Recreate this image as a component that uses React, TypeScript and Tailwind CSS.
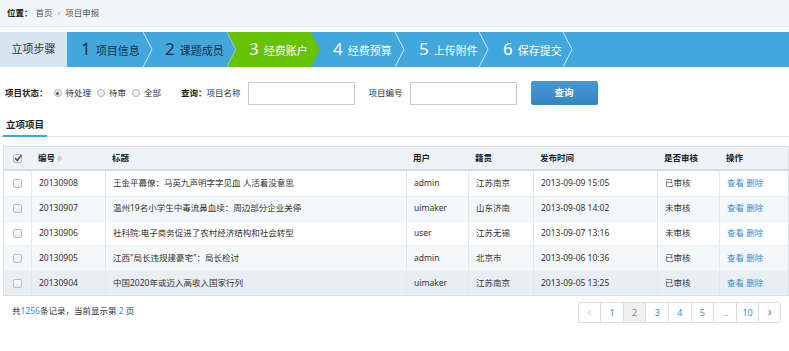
import React from "react";

const rows = [
  ["20130908", "王金平幕僚：马英九声明字字见血 人活着没意思", "admin", "江苏南京", "2013-09-09 15:05", "已审核"],
  ["20130907", "温州19名小学生中毒流鼻血续：周边部分企业关停", "uimaker", "山东济南", "2013-09-08 14:02", "未审核"],
  ["20130906", "社科院:电子商务促进了农村经济结构和社会转型", "user", "江苏无锡", "2013-09-07 13:16", "未审核"],
  ["20130905", "江西\"局长违规建豪宅\"：局长检讨", "admin", "北京市", "2013-09-06 10:36", "已审核"],
  ["20130904", "中国2020年或迈入高收入国家行列", "uimaker", "江苏南京", "2013-09-05 13:25", "已审核"],
];

const rowBg = ["bg-white", "bg-[#f5f8fa]", "bg-white", "bg-[#f5f8fa]", "bg-[#e9eef2]"];

const steps = [
  { n: "1", label: "项目信息", w: "w-[76px] pl-[14px]", text: "text-[#17304a]" },
  { n: "2", label: "课题成员", w: "w-[84px] pl-[22px]", text: "text-[#17304a]" },
  { n: "3", label: "经费账户", w: "w-[84px] pl-[22px]", text: "text-white", active: true },
  { n: "4", label: "经费预算", w: "w-[84px] pl-[22px]", text: "text-white" },
  { n: "5", label: "上传附件", w: "w-[84px] pl-[24px]", text: "text-white" },
  { n: "6", label: "保存提交", w: "w-[84px] pl-[24px]", text: "text-white" },
];

const Chevron = () => (
  <svg className="absolute left-full top-0 z-10" width="10" height="35" viewBox="0 0 10 35">
    <polyline points="0,0 9,17.5 0,35" fill="none" stroke="#cfe9f7" strokeWidth="1" />
  </svg>
);

const Checkbox = ({ checked }: { checked?: boolean }) => (
  <div className="relative w-[9px] h-[9px] rounded-[2px] border border-[#b9bec2] bg-gradient-to-b from-white to-[#e6e9eb]">
    {checked && (
      <svg className="absolute -left-px -top-[2px]" width="10" height="10" viewBox="0 0 10 10">
        <polyline points="2,5 4.2,7.5 8.5,2" fill="none" stroke="#555" strokeWidth="1.6" />
      </svg>
    )}
  </div>
);

const Radio = ({ checked }: { checked?: boolean }) => (
  <div className="w-[8px] h-[8px] rounded-full border border-[#b0b5b9] bg-[#eef0f2] flex items-center justify-center ml-[6px] mr-[4px]">
    {checked && <div className="w-[3px] h-[3px] rounded-full bg-[#555]" />}
  </div>
);

const cols = "grid grid-cols-[27px_74px_301px_62px_65px_124px_62px_1fr]";

export default function App() {
  return (
    <div className="w-[789px] h-[351px] bg-white overflow-hidden text-[#333] [font-family:'Noto_Sans','Noto_Sans_CJK_SC',sans-serif]">
      {/* breadcrumb */}
      <div className="h-[27px] bg-[#f1f6fa] border-b border-[#dfe8ee] flex items-center pl-[7px] text-[8.5px]">
        <span className="font-bold text-[#222]">位置：</span>
        <span className="ml-[3px] text-[#555]">首页</span>
        <span className="mx-[5px] text-[#aaa]">›</span>
        <span className="text-[#555]">项目申报</span>
      </div>

      {/* stepper */}
      <div className="mt-[5px] h-[35px] bg-[#41a7dc] flex">
        <div className="w-[67px] bg-[#d6e5ef] flex items-center justify-center text-[11px] text-[#333]">立项步骤</div>
        {steps.map((s) => (
          <div key={s.n} className={`relative h-full flex items-center ${s.w}`}>
            {s.active && (
              <svg className="absolute left-0 top-0 z-20" width="93" height="35" viewBox="0 0 93 35">
                <polygon points="0,0 84,0 93,17.5 84,35 0,35 9,17.5" fill="#66c205" />
              </svg>
            )}
            <div className={`relative z-30 flex items-baseline ${s.text}`}>
              <span className="text-[17px] leading-none">{s.n}</span>
              <span className="ml-[5px] text-[11px]">{s.label}</span>
            </div>
            {!s.active && <Chevron />}
          </div>
        ))}
      </div>

      {/* filter row */}
      <div className="mt-[14px] h-[24px] flex items-center pl-[5px] text-[8.5px]">
        <span className="font-bold text-[#222]">项目状态：</span>
        <Radio checked />
        <span>待处理</span>
        <Radio />
        <span>待审</span>
        <Radio />
        <span>全部</span>
        <span className="ml-[20px] font-bold text-[#222]">查询：</span>
        <span>项目名称</span>
        <div className="ml-[7px] w-[107px] h-[23px] border border-[#cbcbcb] bg-white" />
        <span className="ml-[14px]">项目编号</span>
        <div className="ml-[7px] w-[107px] h-[23px] border border-[#cbcbcb] bg-white" />
        <button className="ml-[14px] w-[67px] h-[24px] rounded-[2px] bg-gradient-to-b from-[#4598d2] to-[#3386c1] text-white font-bold text-[9.5px]">
          查询
        </button>
      </div>

      {/* tab */}
      <div className="mt-[10px] border-b border-[#e1e6ea] flex pl-[3px]">
        <div className="h-[22px] px-[3px] flex items-center border-b-2 border-[#3ea6dd] -mb-px text-[9.5px] font-bold text-[#222]">
          立项项目
        </div>
      </div>

      {/* table */}
      <div className="mt-[9px] ml-[3px] border border-[#d9e1e7] text-[8.5px]">
        <div className={`${cols} h-[24px] bg-[#eef3f7] border-b-2 border-[#d6dee4] font-bold text-[#222]`}>
          <div className="flex items-center justify-center"><Checkbox checked /></div>
          <div className="flex items-center pl-[7px]">
            编号
            <svg className="ml-[2px]" width="5" height="7" viewBox="0 0 5 7">
              <polygon points="2.5,0.5 4.5,3 0.5,3" fill="none" stroke="#aab" strokeWidth="0.6" />
              <polygon points="0.5,4 4.5,4 2.5,6.5" fill="none" stroke="#aab" strokeWidth="0.6" />
            </svg>
          </div>
          <div className="flex items-center pl-[7px]">标题</div>
          <div className="flex items-center pl-[7px]">用户</div>
          <div className="flex items-center pl-[7px]">籍贯</div>
          <div className="flex items-center pl-[7px]">发布时间</div>
          <div className="flex items-center pl-[7px]">是否审核</div>
          <div className="flex items-center pl-[7px]">操作</div>
        </div>
        {rows.map((r, i) => (
          <div key={r[0]} className={`${cols} h-[24.8px] ${rowBg[i]} ${i > 0 ? "border-t border-[#edf1f4]" : ""}`}>
            <div className="flex items-center justify-center"><Checkbox /></div>
            {r.map((c, j) => (
              <div key={j} className="flex items-center pl-[7px] border-l border-[#e3e8ec] whitespace-nowrap">{c}</div>
            ))}
            <div className="flex items-center pl-[7px] border-l border-[#e3e8ec] text-[#3a8fcc]">查看 删除</div>
          </div>
        ))}
      </div>

      {/* footer */}
      <div className="mt-[6px] flex items-start justify-between pr-[8px]">
        <div className="pl-[12px] mt-[3px] text-[8.5px]">
          共<span className="text-[#3a8fcc]">1256</span>条记录，当前显示第 <span className="text-[#3a8fcc]">2</span> 页
        </div>
        <div className="flex h-[21px] text-[9px]">
          {["‹", "1", "2", "3", "4", "5", "...", "10", "›"].map((p, i, a) => (
            <div
              key={i}
              className={`w-[22.6px] flex items-center justify-center border-y border-l border-[#dddddd] ${
                i === 0 ? "rounded-l-[3px] text-[#c5c5c5] text-[12px]" : ""
              } ${i === a.length - 1 ? "border-r rounded-r-[3px] text-[#3a7fb8] text-[12px]" : ""} ${
                p === "2" ? "bg-[#efefef] text-[#888]" : p === "..." ? "text-[#999]" : i > 0 && i < a.length - 1 ? "text-[#3a8fcc]" : ""
              }`}
            >
              {p}
            </div>
          ))}
        </div>
      </div>
    </div>
  );
}
